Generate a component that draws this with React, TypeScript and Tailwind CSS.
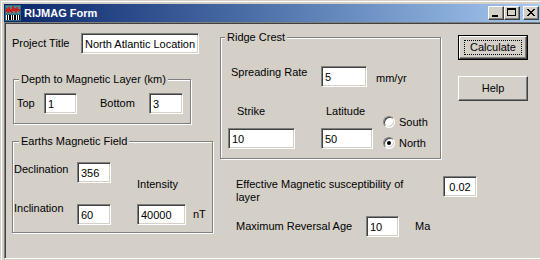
import React from "react";

const sunken =
    "bg-white border border-t-[#808080] border-l-[#808080] border-r-white border-b-white shadow-[inset_1px_1px_0_#404040,inset_-1px_-1px_0_#d4d0c8] outline-none text-black text-[11px] leading-[13px]";
const raised =
    "bg-[#d4d0c8] border border-t-white border-l-white border-r-[#404040] border-b-[#404040] shadow-[inset_-1px_-1px_0_#808080]";

function Field({ value, className }: { value: string; className: string }) {
    return <input type="text" defaultValue={value} className={`${sunken} ${className}`} />;
}

function GroupBox({
    title,
    className,
    legendClass,
    children,
}: {
    title: string;
    className: string;
    legendClass: string;
    children: React.ReactNode;
}) {
    return (
        <div className={`relative border border-[#808080] shadow-[inset_1px_1px_0_#fff,1px_1px_0_#fff] ${className}`}>
            <span className={`absolute -top-[7px] px-[2px] bg-[#d4d0c8] leading-[13px] ${legendClass}`}>{title}</span>
            {children}
        </div>
    );
}

function Radio({ label, checked }: { label: string; checked?: boolean }) {
    return (
        <div className="flex items-center h-[14px]">
            <div className="relative w-[12px] h-[12px] rounded-full bg-white border border-t-[#808080] border-l-[#808080] border-r-white border-b-white shadow-[inset_1px_1px_0_#404040,inset_-1px_-1px_0_#d4d0c8] flex items-center justify-center">
                {checked && <div className="w-[4px] h-[4px] rounded-full bg-black" />}
            </div>
            <span className="ml-[4px] leading-[13px]">{label}</span>
        </div>
    );
}

function AppIcon() {
    return (
        <svg width="16" height="16" viewBox="0 0 16 16" shapeRendering="crispEdges">
            <rect x="0" y="0" width="16" height="16" fill="#2c6c7c" />
            <rect x="1" y="1" width="14" height="8" fill="#4a8a8f" />
            <polyline
                points="1,7 2,3 3,8 4,2 5,7 6,4 7,8 8,1 9,6 10,3 11,8 12,2 13,6 14,4 15,7"
                fill="none"
                stroke="#e01010"
                strokeWidth="1"
                shapeRendering="auto"
            />
            <rect x="1" y="10" width="14" height="5" fill="#ffffff" />
            <rect x="2" y="10" width="1" height="5" fill="#000" />
            <rect x="4" y="10" width="2" height="5" fill="#000" />
            <rect x="7" y="10" width="1" height="5" fill="#000" />
            <rect x="9" y="10" width="2" height="5" fill="#000" />
            <rect x="12" y="10" width="1" height="5" fill="#000" />
            <rect x="14" y="10" width="1" height="5" fill="#000" />
        </svg>
    );
}

function CaptionButton({ kind }: { kind: "min" | "max" | "close" }) {
    return (
        <div className={`w-[16px] h-[14px] ${raised} flex items-center justify-center`}>
            <svg width="14" height="12" viewBox="0 0 14 12" shapeRendering="crispEdges">
                {kind === "min" && <rect x="3" y="8" width="6" height="2" fill="#000" />}
                {kind === "max" && (
                    <>
                        <rect x="2" y="1" width="9" height="2" fill="#000" />
                        <rect x="2" y="1" width="1" height="8" fill="#000" />
                        <rect x="10" y="1" width="1" height="8" fill="#000" />
                        <rect x="2" y="8" width="9" height="1" fill="#000" />
                    </>
                )}
                {kind === "close" && (
                    <path
                        d="M3 2h2v1h1v1h2v-1h1v-1h2v1h-1v1h-1v1h-1v1h1v1h1v1h1v1h-2v-1h-1v-1h-2v1h-1v1h-2v-1h1v-1h1v-1h1v-1h-1v-1h-1v-1h-1z"
                        fill="#000"
                    />
                )}
            </svg>
        </div>
    );
}

export default function App() {
    return (
        <div className="w-[540px] h-[260px] overflow-hidden bg-[#d4d0c8] font-['Liberation_Sans',Arial,sans-serif] text-[11px] text-black">
            <div className="w-[545px] h-[262px] pt-[4px] px-[4px] shadow-[inset_1px_1px_0_#d4d0c8,inset_2px_2px_0_#fff]">
                {/* Title bar */}
                <div className="h-[18px] flex items-center pl-[1px] pr-[2px] bg-gradient-to-r from-[#0a246a] to-[#a6caf0]">
                    <AppIcon />
                    <span className="ml-[3px] text-white font-bold text-[11px] leading-[13px]">RIJMAG Form</span>
                    <div className="ml-auto flex items-center">
                        <CaptionButton kind="min" />
                        <CaptionButton kind="max" />
                        <div className="ml-[3px]">
                            <CaptionButton kind="close" />
                        </div>
                    </div>
                </div>

                {/* Client area */}
                <div className="h-[237px] border border-t-[#808080] border-l-[#808080] border-r-white border-b-white shadow-[inset_1px_1px_0_#404040] p-[1px]">
                    <div className="flex items-start pl-[6px]">
                        {/* Left column */}
                        <div className="w-[201px] flex flex-col">
                            <div className="mt-[9px] flex items-center">
                                <span className="w-[69px] leading-[13px]">Project Title</span>
                                <Field value="North Atlantic Location" className="w-[118px] h-[21px] pl-[3px]" />
                            </div>

                            <GroupBox
                                title="Depth to Magnetic Layer (km)"
                                className="mt-[25px] ml-[1px] w-[178px] h-[45px]"
                                legendClass="left-[5px]"
                            >
                                <div className="pt-[13px] pl-[3px] flex items-center">
                                    <span className="w-[27px] leading-[13px]">Top</span>
                                    <Field value="1" className="w-[33px] h-[21px] pl-[3px]" />
                                    <span className="ml-[23px] w-[49px] leading-[13px]">Bottom</span>
                                    <Field value="3" className="w-[34px] h-[21px] pl-[3px]" />
                                </div>
                            </GroupBox>

                            <GroupBox
                                title="Earths Magnetic Field"
                                className="mt-[17px] w-[201px] h-[92px]"
                                legendClass="left-[6px]"
                            >
                                <div className="pt-[20px] pl-[1px]">
                                    <div className="flex items-start">
                                        <span className="w-[63px] mt-[1px] leading-[13px]">Declination</span>
                                        <Field value="356" className="w-[34px] h-[21px] pl-[3px]" />
                                        <span className="ml-[26px] mt-[16px] leading-[13px]">Intensity</span>
                                    </div>
                                    <div className="mt-[11px] flex items-start">
                                        <span className="w-[63px] leading-[13px]">Inclination</span>
                                        <Field value="60" className="mt-[2px] w-[34px] h-[21px] pl-[3px]" />
                                        <Field value="40000" className="mt-[2px] ml-[26px] w-[49px] h-[21px] pl-[3px]" />
                                        <span className="ml-[7px] mt-[6px] leading-[13px]">nT</span>
                                    </div>
                                </div>
                            </GroupBox>
                        </div>

                        {/* Right area */}
                        <div className="ml-[7px] flex flex-col">
                            <div className="flex items-start">
                                <GroupBox title="Ridge Crest" className="mt-[13px] w-[221px] h-[122px]" legendClass="left-[4px]">
                                    <div className="pt-[28px] pl-[10px] flex items-start">
                                        <span className="w-[90px] leading-[13px]">Spreading Rate</span>
                                        <Field value="5" className="w-[46px] h-[21px] pl-[3px]" />
                                        <span className="ml-[9px] mt-[6px] leading-[13px]">mm/yr</span>
                                    </div>
                                    <div className="mt-[18px] pl-[7px] flex items-start">
                                        <div className="flex flex-col">
                                            <div className="flex">
                                                <span className="w-[93px] pl-[9px] leading-[13px]">Strike</span>
                                                <span className="pl-[5px] leading-[13px]">Latitude</span>
                                            </div>
                                            <div className="mt-[10px] flex">
                                                <Field value="10" className="w-[67px] h-[21px] pl-[3px]" />
                                                <Field value="50" className="ml-[26px] w-[52px] h-[21px] pl-[3px]" />
                                            </div>
                                        </div>
                                        <div className="ml-[10px] pt-[10px] flex flex-col gap-[7px]">
                                            <Radio label="South" />
                                            <Radio label="North" checked />
                                        </div>
                                    </div>
                                </GroupBox>

                                <div className="ml-[17px] mt-[11px] flex flex-col">
                                    <div className="w-[70px] h-[25px] border border-black">
                                        <button className={`w-full h-full ${raised} flex items-center justify-center px-[4px] py-[3px]`}>
                                            <span className="w-full h-full border border-dotted border-black flex items-center justify-center leading-[13px]">
                                                Calculate
                                            </span>
                                        </button>
                                    </div>
                                    <button className={`mt-[16px] w-[70px] h-[25px] ${raised} leading-[13px]`}>Help</button>
                                </div>
                            </div>

                            <div className="ml-[16px] mt-[17px] flex flex-col">
                                <div className="flex items-start">
                                    <span className="w-[207px] mt-[2px] leading-[13px]">
                                        Effective Magnetic susceptibility of
                                        <br />
                                        layer
                                    </span>
                                    <Field value="0.02" className="w-[34px] h-[21px] text-center" />
                                </div>
                                <div className="mt-[12px] flex items-start">
                                    <span className="w-[130px] mt-[4px] leading-[13px]">Maximum Reversal Age</span>
                                    <Field value="10" className="w-[33px] h-[21px] pl-[3px]" />
                                    <span className="ml-[16px] mt-[4px] leading-[13px]">Ma</span>
                                </div>
                            </div>
                        </div>
                    </div>
                </div>
            </div>
        </div>
    );
}
